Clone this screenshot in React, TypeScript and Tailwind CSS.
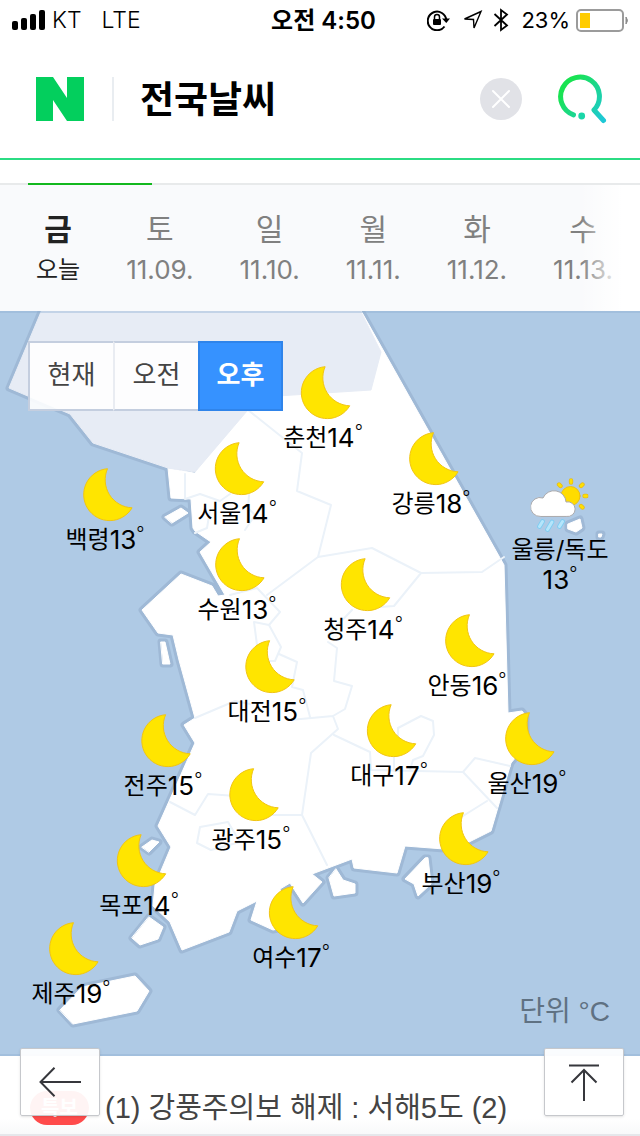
import { useState } from "react";

type PinType = {
  name: string;
  temp: number;
  x: number;
  y: number;
  icon: "moon" | "rain";
};

// Map canvas size, pin positions are given in the same units
const MAP_W = 640;
const MAP_H = 745;

const pins: PinType[] = [
  { name: "춘천", temp: 14, x: 323, y: 55, icon: "moon" },
  { name: "강릉", temp: 18, x: 431, y: 121, icon: "moon" },
  { name: "서울", temp: 14, x: 237, y: 131, icon: "moon" },
  { name: "백령", temp: 13, x: 105, y: 157, icon: "moon" },
  { name: "울릉/독도", temp: 13, x: 560, y: 167, icon: "rain" },
  { name: "수원", temp: 13, x: 237, y: 227, icon: "moon" },
  { name: "청주", temp: 14, x: 363, y: 247, icon: "moon" },
  { name: "안동", temp: 16, x: 467, y: 303, icon: "moon" },
  { name: "대전", temp: 15, x: 267, y: 329, icon: "moon" },
  { name: "대구", temp: 17, x: 389, y: 393, icon: "moon" },
  { name: "울산", temp: 19, x: 527, y: 401, icon: "moon" },
  { name: "전주", temp: 15, x: 163, y: 403, icon: "moon" },
  { name: "광주", temp: 15, x: 251, y: 457, icon: "moon" },
  { name: "부산", temp: 19, x: 461, y: 501, icon: "moon" },
  { name: "목포", temp: 14, x: 139, y: 523, icon: "moon" },
  { name: "여수", temp: 17, x: 291, y: 575, icon: "moon" },
  { name: "제주", temp: 19, x: 71, y: 611, icon: "moon" },
];

const days = [
  { day: "금", date: "오늘" },
  { day: "토", date: "11.09." },
  { day: "일", date: "11.10." },
  { day: "월", date: "11.11." },
  { day: "화", date: "11.12." },
  { day: "수", date: "11.13." },
];

const times = ["현재", "오전", "오후"];

const land = [
  // mainland
  "M168 468L171 498L191 499L193 528L195 531L211 542L200 552L225 595L218 596L212 586L181 574L142 610L158 633L173 635L179 660L195 718L184 725L195 743L158 826L171 847L155 885L153 906L170 922L182 950L229 932L237 911L257 901L251 920L273 930L294 926L285 905L280 889L290 883L303 903L322 882L312 874L352 859L354 868L397 873L405 846L444 849L465 844L491 831L511 763L526 745L526 716L522 711L508 713L504 565L355 300L300 300L195 473Z",
  // islands
  "M165 517L181 508L188 513L172 523Z",
  "M161 642L165 642L170 664L163 664Z",
  "M142 847L152 840L159 842L149 852Z",
  "M149 917L163 927L158 939L140 945L132 938Z",
  "M60 1010L82 987L135 976L149 991L137 1011L73 1024Z",
  "M336 869L343 880L355 884L355 893L334 896L329 878Z",
  "M425 858L405 879L414 884L418 896L431 884L428 858Z",
  "M568 524L580 519L582 528L576 532L568 529Z",
  "M599 534L602 534L601 537L599 537Z",
];

const north =
  "M46 300L9 388L70 414L93 443L168 468L195 472L247 411L277 396L371 390L381 352L355 300Z";

const provinces =
  "M185 474V499L200 494L220 501L230 494M248 410L302 453L297 491L331 505L318 557L267 595M318 557L372 548L421 573L482 572L504 557M421 573L394 606L380 607M352 610L328 635M328 642L337 648L334 681L352 686L345 709L333 716L290 720M333 716L338 729L311 753L302 815L327 865M334 735L370 752L371 770L463 772L475 758L510 766M463 772L497 808M487 801L455 821M394 755V771M410 770L413 760L423 756L434 735L433 721L421 716L398 728V742M170 802L195 815L208 794L250 797M262 815H302M200 827L228 822L240 842L211 850L197 843ZM195 718L235 701L250 704M230 595L257 588L280 612L269 625L254 622L257 645M269 625L281 647L275 661L268 661M279 654L297 662L292 687L303 690L310 717M245 530L255 515L248 508L249 495M195 533L207 528L210 510";

function MapDrawing() {
  return (
    <svg
      viewBox="0 311 640 745"
      className="block h-auto w-full bg-[#afcae5]"
      strokeLinejoin="round"
      strokeLinecap="round"
      aria-hidden="true"
    >
      <g fill="none" stroke="#9fb9d6" strokeWidth="7">
        <path d={north} />
        {land.map((d) => (
          <path key={d} d={d} />
        ))}
      </g>
      <g fill="#fff" stroke="#fff" strokeWidth="1">
        {land.map((d) => (
          <path key={d} d={d} />
        ))}
      </g>
      <path d={north} fill="#e7ecf5" stroke="#e7ecf5" strokeWidth="1" />
      <path d={provinces} fill="none" stroke="#ebf2f9" strokeWidth="2" />
      <path d="M0 312H640M0 1055H640" stroke="#8fb0d3" strokeWidth="2" opacity="0.4" />
    </svg>
  );
}

function MoonIcon() {
  return (
    <svg width="57" height="54" viewBox="-7 0 57 54" strokeLinejoin="round" aria-hidden="true">
      <path
        d="M24 .7A26 26 0 1 0 48.600 39.800A28 28 0 0 1 24 .7Z"
        fill="#ffe500"
        stroke="#f0c414"
        strokeWidth="1"
      />
    </svg>
  );
}

function RainIcon() {
  return (
    <svg width="58" height="54" viewBox="0 0 58 54" strokeLinecap="round" aria-hidden="true">
      <g stroke="#e5bb1c" strokeWidth="4.400">
        <path d="M40.500 2.500V4.500M52 6.500L50.500 8M56 18H54M52 29.500L50.500 28M28.500 6.500L30 8" />
      </g>
      <g stroke="#ffe000" strokeWidth="2.800">
        <path d="M40.500 2.500V4.500M52 6.500L50.500 8M56 18H54M52 29.500L50.500 28M28.500 6.500L30 8" />
      </g>
      <circle cx="40" cy="18" r="9.500" fill="#ffdc00" stroke="#ecc012" />
      <path
        d="M10 38.500A9.500 9.500 0 1 1 12.500 20A12 12 0 0 1 35.500 24A7.400 7.400 0 1 1 36 38.500Z"
        fill="#fff"
        stroke="#aaa9ab"
        strokeWidth="1"
      />
      <path d="M12 43.500L9 48.500M21.500 44L17 51.500M32 43.500L29 48.500" stroke="#7ccdf2" strokeWidth="4.600" />
      <path d="M12 43.500L9 48.500M21.500 44L17 51.500M32 43.500L29 48.500" stroke="#b5e5fb" strokeWidth="3" />
    </svg>
  );
}

function Pin({ pin }: { pin: PinType }) {
  return (
    <li
      className="absolute flex -translate-x-1/2 flex-col items-center gap-[3px] text-2xl leading-[30px] whitespace-nowrap text-black"
      style={{
        left: `${(pin.x / MAP_W) * 100}%`,
        top: `${(pin.y / MAP_H) * 100}%`,
      }}
    >
      {pin.icon === "moon" ? <MoonIcon /> : <RainIcon />}
      <span className={pin.icon === "moon" ? "flex" : "flex flex-col items-center"}>
        <span>{pin.name}</span>
        <span className="flex text-[26px]">
          {pin.temp}
          <span className="text-lg leading-[18px] font-light">°</span>
        </span>
      </span>
    </li>
  );
}

function StatusBar() {
  return (
    <div className="grid h-10 grid-cols-[1fr_auto_1fr] items-center pr-[11px] pl-3 text-[23px] text-black">
      <div className="flex items-center">
        <svg width="34" height="20" viewBox="0 0 34 20" aria-hidden="true">
          <rect x="0" y="11" width="6" height="9" rx="2" />
          <rect x="9" y="8" width="6" height="12" rx="2" />
          <rect x="18" y="4" width="6" height="16" rx="2" />
          <rect x="27" y="0" width="6" height="20" rx="2" />
        </svg>
        <span className="ml-1.5 font-light">KT</span>
        <span className="ml-5 font-light">LTE</span>
      </div>
      <div className="pt-0.5 pl-1.5 text-2xl font-semibold">오전 4:50</div>
      <div className="flex items-center justify-end">
        <svg width="24" height="22" viewBox="0 0 24 22" fill="none" stroke="#000" strokeWidth="2" aria-hidden="true">
          <path d="M17.500 17.500A9.300 9.300 0 1 1 19.300 11" />
          <path d="M15 9.500H23L19.300 14Z" fill="#000" stroke="none" />
          <rect x="6" y="10" width="8" height="6" rx="1" fill="#000" stroke="none" />
          <path d="M7.500 10V8A2.500 2.500 0 0 1 12.500 8V10" strokeWidth="1.500" />
        </svg>
        <svg className="ml-3" width="20" height="20" viewBox="0 0 20 20" fill="none" stroke="#000" strokeWidth="1.400" aria-hidden="true">
          <path d="M1.500 9L18 1.500L11 18L10.500 9.500Z" />
        </svg>
        <svg className="ml-2.5" width="16" height="24" viewBox="0 0 16 24" fill="none" stroke="#000" strokeWidth="1.800" aria-hidden="true">
          <path d="M1.500 6L14 17.500L8 22V2L14 6.500L1.500 18" />
        </svg>
        <span className="ml-3 text-[22px]">23%</span>
        <svg className="ml-1.5" width="53" height="23" viewBox="0 0 53 23" aria-hidden="true">
          <rect x="1" y="1" width="46" height="21" rx="4" fill="none" stroke="#9b9b9b" strokeWidth="2" />
          <rect x="4" y="4" width="10" height="15" fill="#ffcc00" />
          <path d="M50 8Q53 11.500 50 15Z" fill="#8b8b8b" stroke="#8b8b8b" />
        </svg>
      </div>
    </div>
  );
}

function SearchBar() {
  const [query, setQuery] = useState("전국날씨");

  return (
    <form
      className="flex h-[120px] items-center border-b-2 border-[#2bdc83] pr-8 pl-9"
      onSubmit={(e) => e.preventDefault()}
    >
      <a href="#" aria-label="NAVER">
        <svg width="48" height="44" viewBox="0 0 48 44" aria-hidden="true">
          <path d="M0 0H17L31 21V0H48V44H31L17 23V44H0Z" fill="#03cf5d" />
        </svg>
      </a>
      <span className="ml-7 h-11 w-0.5 bg-[#e9edf1]" />
      <input
        type="text"
        aria-label="검색어"
        value={query}
        onChange={(e) => setQuery(e.target.value)}
        className="ml-[26px] min-w-0 flex-1 bg-transparent pt-0.5 text-[37px] font-bold text-black outline-none"
      />
      <button
        type="button"
        aria-label="지우기"
        className="flex size-[42px] items-center justify-center rounded-full bg-[#e1e2e7]"
        onClick={() => setQuery("")}
      >
        <svg width="20" height="20" viewBox="0 0 20 20" stroke="#fff" strokeWidth="2" strokeLinecap="round" aria-hidden="true">
          <path d="M2 2L18 18M18 2L2 18" />
        </svg>
      </button>
      <button type="submit" aria-label="검색" className="ml-[34px]">
        <svg width="52" height="52" viewBox="556 73 52 52" fill="none" aria-hidden="true">
          <defs>
            <linearGradient id="searchGradient" gradientUnits="userSpaceOnUse" x1="566" y1="88" x2="604" y2="118">
              <stop offset="0" stopColor="#19e352" />
              <stop offset="1" stopColor="#1ec8d6" />
            </linearGradient>
          </defs>
          <path
            d="M573.500 114.800A19.400 19.400 0 1 1 594 110L603.500 120.500"
            stroke="url(#searchGradient)"
            strokeWidth="5"
            strokeLinecap="round"
            strokeLinejoin="round"
          />
          <circle cx="581.700" cy="116" r="3.400" fill="#1bd6a8" />
        </svg>
      </button>
    </form>
  );
}

function DayTabs() {
  const [selected, setSelected] = useState(0);

  return (
    <nav className="relative flex gap-[46px] overflow-hidden bg-[#f9fafc] px-9 pt-6 pb-5">
      {days.map((item, index) => (
        <button
          key={item.date}
          type="button"
          onClick={() => setSelected(index)}
          className={`flex shrink-0 flex-col items-center ${
            selected === index ? "text-[#222]" : "text-[#808080]"
          }`}
        >
          <span className={`text-3xl leading-10 ${selected === index ? "font-bold" : ""}`}>
            {item.day}
          </span>
          <span className={`leading-[42px] ${index === 0 ? "text-2xl" : "text-[26px]"}`}>
            {item.date}
          </span>
        </button>
      ))}
      <div className="pointer-events-none absolute inset-y-0 right-0 w-[60px] bg-linear-to-r from-white/0 to-white to-70%" />
    </nav>
  );
}

function TimeTabs() {
  const [selected, setSelected] = useState("오후");

  return (
    <div className="absolute top-[30px] left-7 flex text-[26px]">
      {times.map((time) => (
        <button
          key={time}
          type="button"
          onClick={() => setSelected(time)}
          className={`h-[70px] w-[85px] border-y-2 border-l-2 pb-1 ${
            selected === time
              ? "border-r-2 border-[#2f84ea] bg-[#3692ff] font-bold text-white"
              : "border-y-[#c4cedf] border-l-[#e9ecf2] bg-white/90 text-[#444] first:border-l-[#c4cedf]"
          }`}
        >
          {time}
        </button>
      ))}
    </div>
  );
}

export default function App() {
  return (
    <main className="min-h-screen bg-white font-['Inter','Noto_Sans_CJK_KR',sans-serif]">
      <StatusBar />
      <SearchBar />

      <div className="mt-[23px] h-0.5 bg-[#e8eaeb]">
        <div className="ml-7 h-full w-[124px] bg-[#13b81e]" />
      </div>
      <DayTabs />

      <section className="relative">
        <MapDrawing />
        <ul>
          {pins.map((pin) => (
            <Pin key={pin.name} pin={pin} />
          ))}
        </ul>
        <TimeTabs />
        <p className="absolute right-[30px] bottom-6 font-['Liberation_Sans','Noto_Sans_CJK_KR',sans-serif] text-[28px] leading-10 text-[#5f7182]">
          단위 °C
        </p>
      </section>

      <a
        href="#"
        className="flex h-20 items-center gap-4 border-b-2 border-[#e5e7eb] bg-linear-to-b from-white from-80% to-[#f8f9fa] pt-[26px] pl-[30px] font-['Liberation_Sans','Noto_Sans_CJK_KR',sans-serif]"
      >
        <span className="flex h-[34px] w-[59px] items-center justify-center rounded-full bg-[#ff4b4b] text-xl font-bold text-white">
          특보
        </span>
        <span className="text-[29px] leading-10 text-[#444]">(1) 강풍주의보 해제 : 서해5도 (2)</span>
      </a>

      <button
        type="button"
        aria-label="뒤로"
        className="fixed bottom-5 left-5 flex h-[68px] w-20 items-center justify-center rounded-xs border border-[#c6c8cc] bg-white/94 shadow-sm"
        onClick={() => window.history.back()}
      >
        <svg width="42" height="30" viewBox="0 0 42 30" fill="none" stroke="#36373c" strokeWidth="2" aria-hidden="true">
          <path d="M42 15H1.500M15.500 .700L1.500 15L15.500 29.300" />
        </svg>
      </button>
      <button
        type="button"
        aria-label="맨 위로"
        className="fixed right-4 bottom-5 flex h-[68px] w-20 items-center justify-center rounded-xs border border-[#c6c8cc] bg-white/94 shadow-sm"
        onClick={() => window.scrollTo(0, 0)}
      >
        <svg width="30" height="37" viewBox="0 0 30 37" fill="none" stroke="#36373c" strokeWidth="2" aria-hidden="true">
          <path d="M0 1.500H30M15 37V6M2.500 18.500L15 6L27.500 18.500" />
        </svg>
      </button>
    </main>
  );
}
